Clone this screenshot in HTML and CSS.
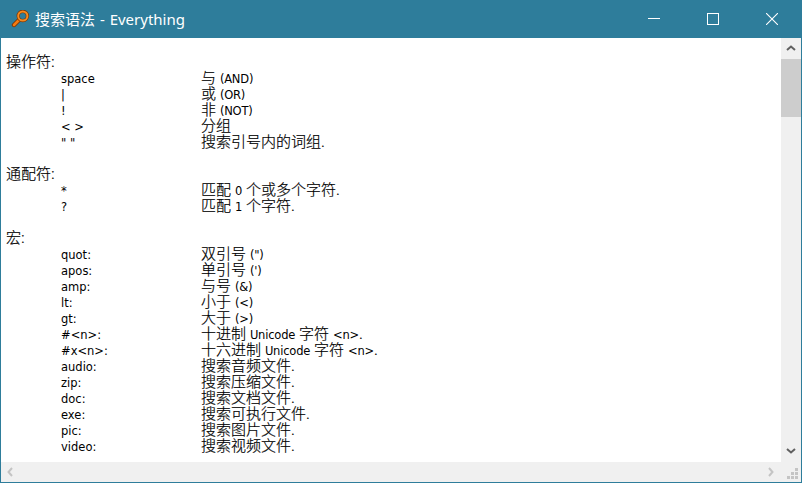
FILE: index.html
```html
<!DOCTYPE html>
<html lang="zh-CN">
<head>
<meta charset="utf-8">
<title>搜索语法 - Everything</title>
<link rel="stylesheet" href="styles.css">
</head>
<body>
<div class="window">
  <header class="titlebar">
    <svg class="app-icon" width="18" height="18" viewBox="0 0 18 18"><path d="M7.500 10.500 3 15" stroke="#7a3300" stroke-width="4.400" stroke-linecap="round"/><path d="M7.500 10.500 3 15" stroke="#f27a12" stroke-width="2.600" stroke-linecap="round"/><circle cx="11.800" cy="6" r="4.600" fill="none" stroke="#7a3300" stroke-width="3.200"/><circle cx="11.800" cy="6" r="4.600" fill="none" stroke="#f58a1f" stroke-width="2"/></svg>
    <span class="title">搜索语法 - Everything</span>
    <div class="controls">
      <button class="ctl"><svg width="12" height="12" viewBox="0 0 12 12"><path d="M0 5.500H12" stroke="#fff"/></svg></button>
      <button class="ctl"><svg width="12" height="12" viewBox="0 0 12 12"><rect x=".5" y=".5" width="11" height="11" fill="none" stroke="#fff"/></svg></button>
      <button class="ctl"><svg width="12" height="12" viewBox="0 0 12 12"><path d="M0 0 12 12M12 0 0 12" stroke="#fff" stroke-width="1.100"/></svg></button>
    </div>
  </header>
  <div class="client">
    <main class="doc">
      <section class="group">
        <h2 class="head">操作符:</h2>
        <div class="row"><span class="term">space</span><span>与 <b>(AND)</b></span></div>
        <div class="row"><span class="term">|</span><span>或 <b>(OR)</b></span></div>
        <div class="row"><span class="term">!</span><span>非 <b>(NOT)</b></span></div>
        <div class="row"><span class="term">&lt; &gt;</span><span>分组</span></div>
        <div class="row"><span class="term">" "</span><span>搜索引号内的词组.</span></div>
      </section>
      <section class="group">
        <h2 class="head">通配符:</h2>
        <div class="row"><span class="term">*</span><span>匹配 <b>0</b> 个或多个字符.</span></div>
        <div class="row"><span class="term">?</span><span>匹配 <b>1</b> 个字符.</span></div>
      </section>
      <section class="group">
        <h2 class="head">宏:</h2>
        <div class="row"><span class="term">quot:</span><span>双引号 <b>(")</b></span></div>
        <div class="row"><span class="term">apos:</span><span>单引号 <b>(')</b></span></div>
        <div class="row"><span class="term">amp:</span><span>与号 <b>(&amp;)</b></span></div>
        <div class="row"><span class="term">lt:</span><span>小于 <b>(&lt;)</b></span></div>
        <div class="row"><span class="term">gt:</span><span>大于 <b>(&gt;)</b></span></div>
        <div class="row"><span class="term">#&lt;n&gt;:</span><span>十进制 <b>Unicode</b> 字符 <b>&lt;n&gt;</b>.</span></div>
        <div class="row"><span class="term">#x&lt;n&gt;:</span><span>十六进制 <b>Unicode</b> 字符 <b>&lt;n&gt;</b>.</span></div>
        <div class="row"><span class="term">audio:</span><span>搜索音频文件.</span></div>
        <div class="row"><span class="term">zip:</span><span>搜索压缩文件.</span></div>
        <div class="row"><span class="term">doc:</span><span>搜索文档文件.</span></div>
        <div class="row"><span class="term">exe:</span><span>搜索可执行文件.</span></div>
        <div class="row"><span class="term">pic:</span><span>搜索图片文件.</span></div>
        <div class="row"><span class="term">video:</span><span>搜索视频文件.</span></div>
      </section>
    </main>
    <aside class="vscroll">
      <svg class="arrow" width="10" height="6" viewBox="0 0 10 6"><path d="M1 5 5 1.500 9 5" fill="none" stroke="#606060" stroke-width="2"/></svg>
      <div class="vtrack"><div class="vthumb"></div></div>
      <svg class="arrow" width="10" height="6" viewBox="0 0 10 6"><path d="M1 1 5 4.500 9 1" fill="none" stroke="#606060" stroke-width="2"/></svg>
    </aside>
  </div>
  <footer class="hscroll">
    <svg width="6" height="10" viewBox="0 0 6 10"><path d="M5 1 1.500 5 5 9" fill="none" stroke="#c4c4c4" stroke-width="2"/></svg>
    <svg width="6" height="10" viewBox="0 0 6 10"><path d="M1 1 4.500 5 1 9" fill="none" stroke="#c4c4c4" stroke-width="2"/></svg>
    <svg class="grip" width="20" height="20" viewBox="0 0 20 20" fill="#c4c4c4"><rect x="14" y="6" width="3" height="3"/><rect x="10" y="10" width="3" height="3"/><rect x="14" y="10" width="3" height="3"/><rect x="6" y="14" width="3" height="3"/><rect x="10" y="14" width="3" height="3"/><rect x="14" y="14" width="3" height="3"/></svg>
  </footer>
</div>
</body>
</html>
```
FILE: styles.css
```css
* { box-sizing: border-box; }
html, body { margin: 0; height: 100%; }
body {
  font-family: "Noto Sans", "Noto Sans CJK SC", sans-serif;
  color: #000;
  background: #fff;
}
.window {
  width: 802px;
  height: 483px;
  display: flex;
  flex-direction: column;
  border: solid #2e7d9b;
  border-width: 0 1px 1px 1px;
  overflow: hidden;
}
.titlebar {
  height: 38px;
  flex: none;
  display: flex;
  align-items: center;
  background: #2e7d9b;
  color: #fff;
  padding-left: 10px;
}
.app-icon { flex: none; margin-right: 6px; }
.title { font-size: 15px; line-height: 38px; word-spacing: 1px; white-space: nowrap; }
.controls { margin-left: auto; display: flex; align-items: center; }
.ctl {
  width: 59px;
  height: 38px;
  padding: 0;
  border: 0;
  background: none;
  display: flex;
  align-items: center;
  justify-content: center;
}
.client { flex: 1; min-height: 0; display: flex; }
.doc {
  flex: 1;
  min-width: 0;
  padding: 15px 0 0 5px;
  font-size: 15px;
  font-weight: 300;
  -webkit-text-stroke: 0.2px #000;
  line-height: 16px;
  overflow: hidden;
}
.group { margin-bottom: 16px; }
.head { margin: 0; font: inherit; }
.row { display: flex; padding-left: 55px; white-space: nowrap; height: 16px; }
.row b { font-family: "DejaVu Sans", sans-serif; font-weight: 400; font-size: 11.500px; letter-spacing: -0.2px; -webkit-text-stroke: 0; }
.term { width: 140px; flex: none; font-family: "DejaVu Sans", sans-serif; font-weight: 400; font-size: 11.500px; padding-top: 2px; -webkit-text-stroke: 0; }
.vscroll {
  width: 20px;
  flex: none;
  background: #f0f0f0;
  display: flex;
  flex-direction: column;
  align-items: center;
}
.arrow { flex: none; margin: 7px 0 8px; }
.vtrack { flex: 1; width: 100%; }
.vthumb { height: 58px; background: #cdcdcd; }
.hscroll {
  height: 20px;
  flex: none;
  background: #f0f0f0;
  display: flex;
  align-items: center;
  justify-content: space-between;
  padding: 0 27px 0 6px;
  position: relative;
}
.grip { position: absolute; right: 0; top: 0; }
```
